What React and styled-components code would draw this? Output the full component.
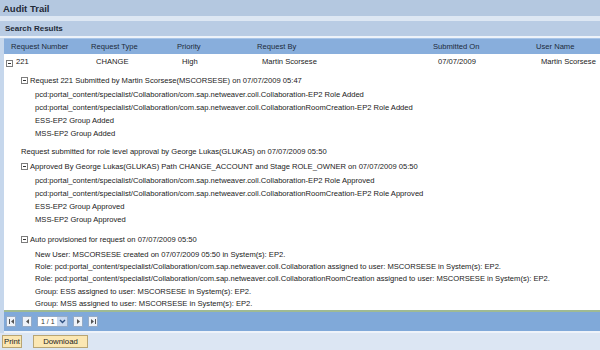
import styled, { createGlobalStyle } from 'styled-components';

const GlobalStyle = createGlobalStyle`
  html, body {
    margin: 0;
    padding: 0;
    background: #dce6f3;
  }
  body {
    font-family: 'Liberation Sans', Arial, sans-serif;
    color: #1a1a1a;
  }
`;

const Page = styled.div`
  width: 600px;
  min-height: 350px;
  background: #dce6f3;
`;

const TitleBar = styled.div`
  height: 16px;
  padding-left: 3px;
  display: flex;
  align-items: center;
  background: #b4c8e0;
  font-size: 9.5px;
  font-weight: bold;
  color: #1e2a38;
`;

const Stripe = styled.div`
  height: 5px;
  background: #dde7f3;
`;

const SectionBar = styled.div`
  height: 15px;
  padding-left: 5px;
  display: flex;
  align-items: center;
  background: #b9cce4;
  font-size: 8px;
  font-weight: bold;
  color: #1e2a38;
  border-bottom: 2px solid #eef3f9;
`;

const TableFrame = styled.div`
  border-left: 4px solid #c6d7ec;
  background: #fff;
`;

const columns = '80px 86px 80px 176px 103px 1fr';

const HeaderRow = styled.div`
  display: grid;
  grid-template-columns: ${columns};
  height: 15px;
  align-items: center;
  background: #88aedc;
  border-top: 1px solid #a9c5e8;
  font-size: 7.6px;
  color: #1c2a3a;
`;

const HeaderCell = styled.div`
  padding-left: 7px;
  white-space: nowrap;
`;

const DataRow = styled.div`
  display: grid;
  grid-template-columns: ${columns};
  height: 15px;
  align-items: center;
  font-size: 7.6px;
`;

const DataCell = styled.div`
  padding-left: ${({ $first }) => ($first ? '2px' : '12px')};
  white-space: nowrap;
  display: flex;
  align-items: center;
`;

const Details = styled.div`
  height: 241px;
  overflow: hidden;
  padding: 4px 0 0 17px;
  box-sizing: border-box;
  font-size: 7.6px;
`;

const Group = styled.div`
  margin-top: ${({ $space }) => $space || 0}px;
`;

const Line = styled.div`
  height: ${({ $h }) => $h || 13}px;
  display: flex;
  align-items: center;
  white-space: nowrap;
  padding-left: ${({ $indent }) => $indent || 0}px;
`;

const Toggle = styled.span`
  width: 5px;
  height: 5px;
  border: 1px solid #7d7d7d;
  background: #fff;
  position: relative;
  margin-right: ${({ $gap }) => $gap || 2}px;
  margin-top: ${({ $drop }) => $drop || 0}px;
  flex-shrink: 0;

  &::after {
    content: '';
    position: absolute;
    left: 1px;
    right: 1px;
    top: 2px;
    height: 1px;
    background: #333;
  }
`;

const GreenRule = styled.div`
  height: 2px;
  background: #9fba93;
`;

const Pager = styled.div`
  height: 19px;
  background: #80a9d9;
  display: flex;
  align-items: center;
  padding-left: 2px;
  gap: 5px;
  border-bottom: 2px solid #eef3fa;
`;

const PageButton = styled.button`
  width: 10px;
  height: 11px;
  padding: 0;
  margin: 0;
  border: 1px solid #95abc7;
  background: #eef2f8;
  display: flex;
  align-items: center;
  justify-content: center;
  margin-right: ${({ $extra }) => $extra || 0}px;
`;

const PageSelect = styled.div`
  width: 31px;
  height: 11px;
  box-sizing: border-box;
  border: 1px solid #95abc7;
  background: #fff;
  display: flex;
  align-items: center;
  font-size: 7px;
  color: #333;
`;

const PageValue = styled.span`
  flex: 1;
  padding-left: 3px;
  white-space: nowrap;
`;

const SelectArrow = styled.span`
  width: 10px;
  height: 100%;
  background: #c9d9f0;
  display: flex;
  align-items: center;
  justify-content: center;
`;

const ButtonBar = styled.div`
  display: flex;
  gap: 11px;
  padding: 2px 0 0 2px;
`;

const ActionButton = styled.button`
  height: 13px;
  width: ${({ $wide }) => ($wide ? '55px' : '20px')};
  padding: 0;
  border: 1px solid #b8a574;
  background: #fbe7b3;
  font-family: 'Liberation Sans', Arial, sans-serif;
  font-size: 7.8px;
  color: #222;
  display: flex;
  align-items: center;
  justify-content: center;
`;

function PagerIcon({ kind }) {
  const fill = '#555';
  return (
    <svg width="7" height="7" viewBox="0 0 7 7">
      {kind === 'first' && (
        <>
          <rect x="1" y="1" width="1" height="5" fill={fill} />
          <polygon points="6,1 6,6 3,3.5" fill={fill} />
        </>
      )}
      {kind === 'prev' && <polygon points="5,1 5,6 2,3.5" fill={fill} />}
      {kind === 'next' && <polygon points="2,1 2,6 5,3.5" fill={fill} />}
      {kind === 'last' && (
        <>
          <polygon points="1,1 1,6 4,3.5" fill={fill} />
          <rect x="5" y="1" width="1" height="5" fill={fill} />
        </>
      )}
    </svg>
  );
}

const headers = ['Request Number', 'Request Type', 'Priority', 'Request By', 'Submitted On', 'User Name'];

const pcdBase = 'pcd:portal_content/specialist/Collaboration/com.sap.netweaver.coll.';

const groups = [
  {
    space: 0,
    titleHeight: 15,
    itemHeight: 13,
    title: 'Request 221 Submitted by Martin Scorsese(MSCORSESE) on 07/07/2009 05:47',
    items: [
      `${pcdBase}Collaboration-EP2 Role Added`,
      `${pcdBase}CollaborationRoomCreation-EP2 Role Added`,
      'ESS-EP2 Group Added',
      'MSS-EP2 Group Added',
    ],
  },
  {
    space: 3,
    titleHeight: 16,
    note: 'Request submitted for role level approval by George Lukas(GLUKAS) on 07/07/2009 05:50',
  },
  {
    space: 0,
    titleHeight: 15,
    itemHeight: 13,
    title: 'Approved By George Lukas(GLUKAS) Path CHANGE_ACCOUNT and Stage ROLE_OWNER on 07/07/2009 05:50',
    items: [
      `${pcdBase}Collaboration-EP2 Role Approved`,
      `${pcdBase}CollaborationRoomCreation-EP2 Role Approved`,
      'ESS-EP2 Group Approved',
      'MSS-EP2 Group Approved',
    ],
  },
  {
    space: 5,
    titleHeight: 17,
    itemHeight: 12.3,
    title: 'Auto provisioned for request on 07/07/2009 05:50',
    items: [
      'New User: MSCORSESE created on 07/07/2009 05:50 in System(s): EP2.',
      `Role: ${pcdBase}Collaboration assigned to user: MSCORSESE in System(s): EP2.`,
      `Role: ${pcdBase}CollaborationRoomCreation assigned to user: MSCORSESE in System(s): EP2.`,
      'Group: ESS assigned to user: MSCORSESE in System(s): EP2.',
      'Group: MSS assigned to user: MSCORSESE in System(s): EP2.',
    ],
  },
];

export default function App() {
  return (
    <>
      <GlobalStyle />
      <Page>
        <TitleBar>Audit Trail</TitleBar>
        <Stripe />
        <SectionBar>Search Results</SectionBar>
        <TableFrame>
          <HeaderRow>
            {headers.map((h) => (
              <HeaderCell key={h}>{h}</HeaderCell>
            ))}
          </HeaderRow>
          <DataRow>
            <DataCell $first>
              <Toggle $gap={3} $drop={4} />
              221
            </DataCell>
            <DataCell>CHANGE</DataCell>
            <DataCell>High</DataCell>
            <DataCell>Martin Scorsese</DataCell>
            <DataCell>07/07/2009</DataCell>
            <DataCell>Martin Scorsese</DataCell>
          </DataRow>
          <Details>
            {groups.map((g, i) => (
              <Group key={i} $space={g.space}>
                {g.note ? (
                  <Line $h={g.titleHeight}>{g.note}</Line>
                ) : (
                  <>
                    <Line $h={g.titleHeight}>
                      <Toggle />
                      {g.title}
                    </Line>
                    {g.items.map((item) => (
                      <Line key={item} $h={g.itemHeight} $indent={14}>
                        {item}
                      </Line>
                    ))}
                  </>
                )}
              </Group>
            ))}
          </Details>
          <GreenRule />
          <Pager>
            <PageButton $extra={1}>
              <PagerIcon kind="first" />
            </PageButton>
            <PageButton>
              <PagerIcon kind="prev" />
            </PageButton>
            <PageSelect>
              <PageValue>1 / 1</PageValue>
              <SelectArrow>
                <svg width="7" height="5" viewBox="0 0 7 5">
                  <polyline points="1,1 3.5,3.5 6,1" fill="none" stroke="#2d4f80" strokeWidth="1.4" />
                </svg>
              </SelectArrow>
            </PageSelect>
            <PageButton>
              <PagerIcon kind="next" />
            </PageButton>
            <PageButton>
              <PagerIcon kind="last" />
            </PageButton>
          </Pager>
        </TableFrame>
        <ButtonBar>
          <ActionButton>Print</ActionButton>
          <ActionButton $wide>Download</ActionButton>
        </ButtonBar>
      </Page>
    </>
  );
}
